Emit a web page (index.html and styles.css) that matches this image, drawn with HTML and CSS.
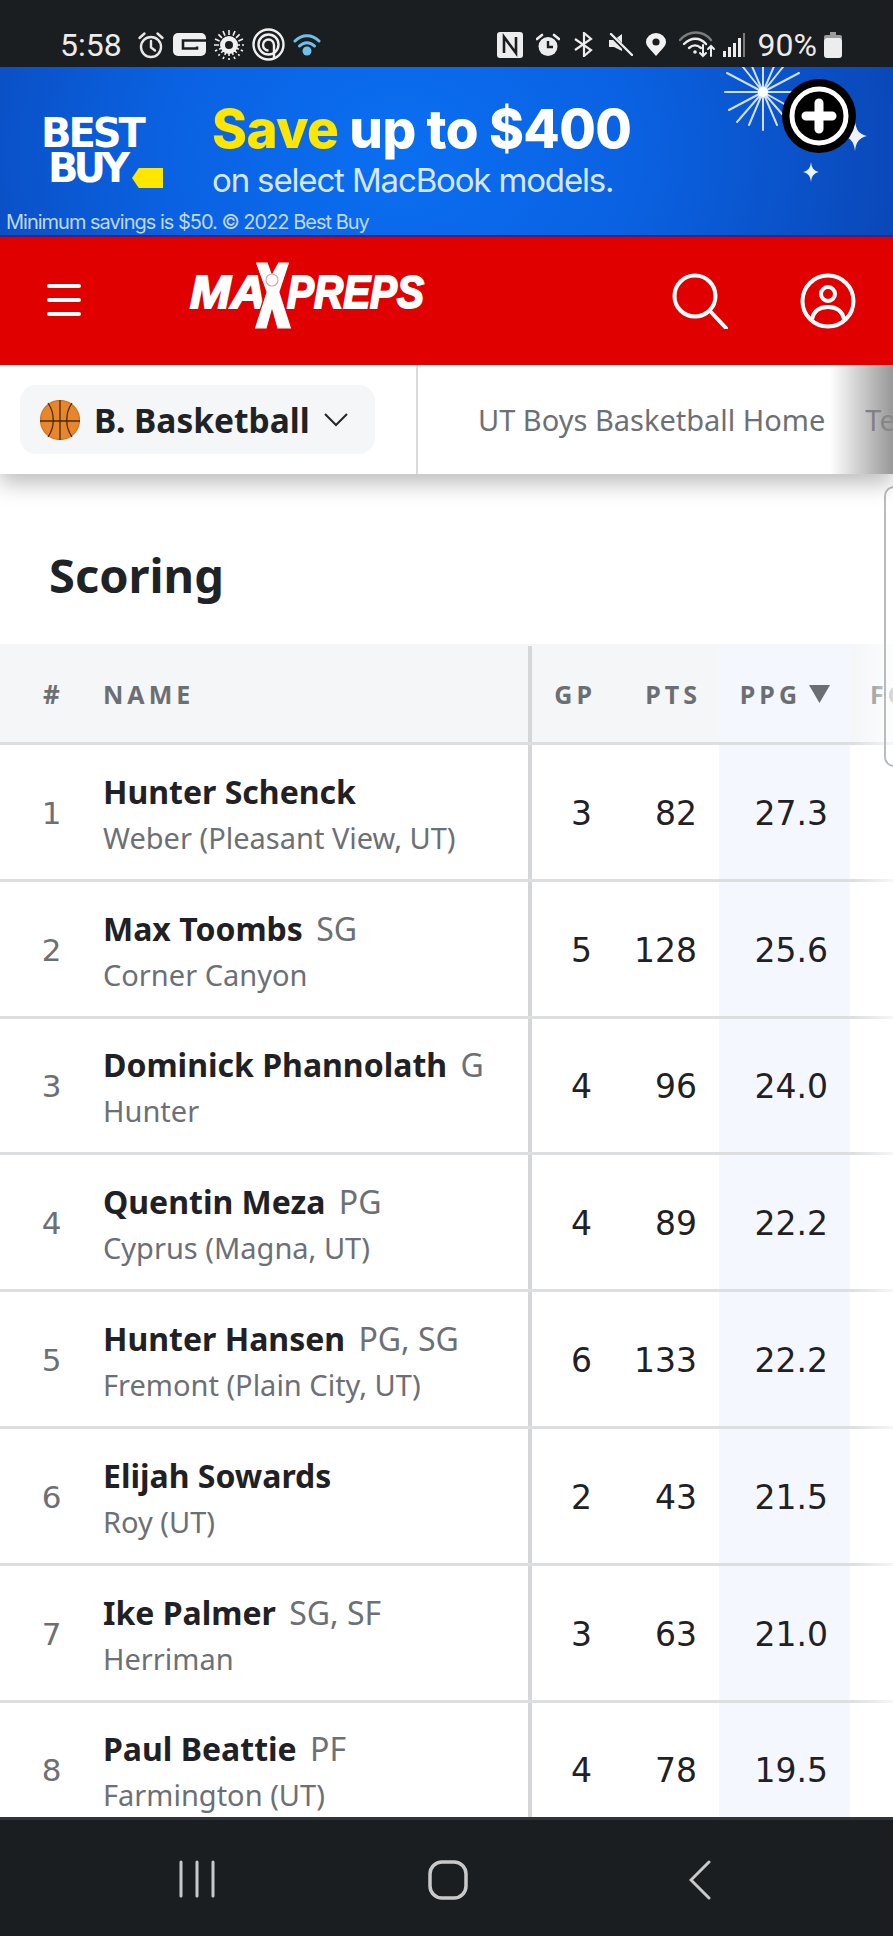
FILE: index.html
```html
<!DOCTYPE html>
<html lang="en">
<head>
<meta charset="utf-8">
<title>Scoring - MaxPreps</title>
<link rel="stylesheet" href="styles.css">
</head>
<body>
<div class="screen">
  <div class="status">
    <div class="status-group">
      <span class="clock">5:58</span>
      <svg class="ic" width="28" height="28" viewBox="0 0 28 28" fill="none" stroke="#e8e8e8" stroke-width="2.4" stroke-linecap="round"><circle cx="14" cy="16" r="10"/><path d="M14 10v6.5l4 3M2.5 7l5-4.5M25.5 7l-5-4.5"/></svg>
      <svg class="ic" width="33" height="23" viewBox="0 0 33 23"><rect width="33" height="23" rx="5" fill="#f0f0f0"/><path d="M33 7.500H10v8h14v-2" fill="none" stroke="#1b1e21" stroke-width="2.600"/></svg>
      <svg class="ic" width="30" height="30" viewBox="0 0 30 30" stroke="#f0f0f0" stroke-width="1.6"><path d="M15 0v30M0 15h30M4.4 4.4l21.2 21.2M25.6 4.4L4.4 25.6M9 1l12 28M21 1L9 29M1 9l28 12M29 9L1 21" stroke-dasharray="5 2"/><circle cx="15" cy="15" r="9" fill="#f0f0f0" stroke="none"/><circle cx="15" cy="15" r="4" fill="#1b1e21" stroke="none"/></svg>
      <svg class="ic" width="33" height="33" viewBox="0 0 33 33" fill="none" stroke="#f0f0f0" stroke-width="2.4"><circle cx="16.5" cy="16.5" r="15"/><circle cx="16.5" cy="16.5" r="10"/><path d="M22 31V17a5.500 5.500 0 1 0-5.500 5.500"/></svg>
      <svg class="ic" width="28" height="25" viewBox="0 0 28 25" fill="none" stroke="#6ec1ea" stroke-width="3" stroke-linecap="round"><path d="M2 9c7-7 17-7 24 0M6.500 14c4.500-4.500 10.500-4.500 15 0"/><circle cx="14" cy="19" r="4.500" fill="#6ec1ea" stroke="none"/></svg>
    </div>
    <div class="status-group right">
      <svg class="ic" width="26" height="26" viewBox="0 0 26 26"><rect width="26" height="26" rx="3" fill="#ededed"/><path d="M7 21V5l12 16V5" fill="none" stroke="#1b1e21" stroke-width="2.600"/></svg>
      <svg class="ic" width="24" height="24" viewBox="0 0 24 24"><circle cx="12" cy="13.500" r="9.500" fill="#ededed"/><path d="M12 8v6h5" fill="none" stroke="#1b1e21" stroke-width="2.400"/><path d="M1 6l5-4M23 6l-5-4" stroke="#ededed" stroke-width="2.600" stroke-linecap="round"/></svg>
      <svg class="ic" width="22" height="25" viewBox="0 0 22 25" fill="none" stroke="#ededed" stroke-width="2.200"><path d="M2 7l16 11-7 6V1l7 6L2 18"/></svg>
      <svg class="ic" width="25" height="23" viewBox="0 0 25 23"><path d="M1 7h5l8-6v17l-8-4H1z" fill="#ededed"/><path d="M2 1l21 21" stroke="#1b1e21" stroke-width="4"/><path d="M3 1l21 21" stroke="#ededed" stroke-width="2.400" stroke-linecap="round"/></svg>
      <svg class="ic" width="20" height="23" viewBox="0 0 20 23"><path d="M10 23C6 18 0 13.500 0 9a10 9 0 0 1 20 0c0 4.500-6 9-10 14z" fill="#f2f2f2"/><circle cx="10" cy="9" r="3.600" fill="#1b1e21"/></svg>
      <svg class="ic tight" width="37" height="27" viewBox="0 0 37 27" fill="none" stroke-linecap="round"><path d="M1 9c9-10 23-10 31 0" stroke="#7c7c7c" stroke-width="2.400"/><path d="M5 13c7-7 16-7 22 0M10 17c4-3.500 8-3.500 12 0" stroke="#ededed" stroke-width="2.400"/><circle cx="16" cy="21" r="1.800" fill="#ededed"/><path d="M24 14v11m-3-3l3 3 3-3M32 25V15m-3 3l3-3 3 3" stroke="#ededed" stroke-width="2"/></svg>
      <svg class="ic" width="22" height="24" viewBox="0 0 22 24" fill="#ededed"><rect x="0" y="18" width="3" height="6"/><rect x="5" y="14" width="3" height="10"/><rect x="10" y="10" width="3" height="14"/><rect x="15" y="5" width="3" height="19"/><rect x="20" y="0" width="2" height="24" fill="#7c7c7c"/></svg>
      <span class="pct">90%</span>
      <svg class="ic tight-left" width="18" height="26" viewBox="0 0 18 26"><path d="M6 0h6v3H6z" fill="#9c9c9c"/><rect y="3" width="18" height="5" rx="2" fill="#9c9c9c"/><rect y="6" width="18" height="20" rx="3" fill="#ededed"/></svg>
    </div>
  </div>

  <div class="banner">
    <div class="bb-logo">
      <div class="bb-word">BEST</div>
      <div class="bb-word second">BUY<i class="bb-tag"></i></div>
    </div>
    <div class="promo">
      <div class="promo-head"><span class="yellow">Save</span> up to $400</div>
      <div class="promo-sub">on select MacBook models.</div>
    </div>
    <div class="legal">Minimum savings is $50. © 2022 Best Buy</div>
    <svg class="firework" width="80" height="70" viewBox="0 0 80 70" stroke="#cfe0ff" stroke-width="2" stroke-linecap="round"><path d="M40 25V-5M40 25V63M40 25H2M40 25H76M40 25L20 0M40 25L60 0M40 25L14 55M40 25L66 55M40 25L4 6M40 25L76 6M40 25L6 43M40 25L72 43M40 25L28 -3M40 25L52 -3M40 25L26 58M40 25L54 58"/><circle cx="40" cy="25" r="5" fill="#fff" stroke="none"/></svg>
    <svg class="sparkle one" width="24" height="30" viewBox="0 0 24 30"><path d="M12 0c1 9 4 13 12 15-8 2-11 6-12 15-1-9-4-13-12-15 8-2 11-6 12-15z" fill="#eaf3ff"/></svg>
    <svg class="sparkle two" width="16" height="22" viewBox="0 0 24 30"><path d="M12 0c1 9 4 13 12 15-8 2-11 6-12 15-1-9-4-13-12-15 8-2 11-6 12-15z" fill="#eaf3ff"/></svg>
    <svg class="plus" width="74" height="74" viewBox="0 0 74 74"><circle cx="37" cy="37" r="37" fill="#000"/><circle cx="37" cy="37" r="27" fill="none" stroke="#fff" stroke-width="5"/><path d="M37 24v26M24 37h26" stroke="#fff" stroke-width="9" stroke-linecap="round"/></svg>
  </div>

  <header class="topbar">
    <div class="burger"><i></i><i></i><i></i></div>
    <svg class="logo" width="240" height="70" viewBox="0 0 240 70">
      <text class="logo-text" x="0" y="46" textLength="76" lengthAdjust="spacingAndGlyphs">MA</text>
      <text class="logo-text" x="97" y="46" textLength="137" lengthAdjust="spacingAndGlyphs">PREPS</text>
      <path d="M65 0h13l4 11 6-11h12L90 30l12 37H87l-5-18-5 18H64l12-37z" fill="#fff" stroke="#e00000" stroke-width="1.200"/>
      <circle cx="82" cy="18" r="6" fill="#fff" stroke="#dda6a6" stroke-width="1.200"/>
    </svg>
    <div class="top-actions">
      <svg width="56" height="56" viewBox="0 0 56 56" fill="none" stroke="#fff" stroke-width="4" stroke-linecap="round"><circle cx="23" cy="23" r="20.500"/><path d="M38 38l16 17"/></svg>
      <svg width="56" height="56" viewBox="0 0 56 56" fill="none" stroke="#fff" stroke-width="4"><circle cx="28" cy="28" r="25.500"/><circle cx="28" cy="21" r="7"/><path d="M12 46c2-9 9-12 16-12s14 3 16 12"/></svg>
    </div>
  </header>

  <nav class="subnav">
    <div class="sport-cell">
      <div class="sport-pill">
        <svg width="40" height="40" viewBox="0 0 40 40" fill="none" stroke="#4a2a10" stroke-width="1.300"><circle cx="20" cy="20" r="19.500" fill="#e8862c" stroke="#d57722"/><path d="M0 21h40M20 0v40M8 3c7 10 7 24 0 34M32 3c-7 10-7 24 0 34"/></svg>
        <span class="sport-name">B. Basketball</span>
        <svg width="24" height="14" viewBox="0 0 24 14" fill="none" stroke="#24272a" stroke-width="2"><path d="M1 1l11 11L23 1"/></svg>
      </div>
    </div>
    <div class="sub-links"><span>UT Boys Basketball Home</span><span>Teams</span></div>
    <div class="sub-fade"></div>
  </nav>

  <main class="content">
    <h1 class="title">Scoring</h1>
    <div class="table">
      <div class="row head">
        <div class="c-rank">#</div>
        <div class="c-name"><span>NAME</span></div>
        <div class="c-num gp"><span class="lab">GP</span></div>
        <div class="c-num pts"><span class="lab">PTS</span></div>
        <div class="c-num ppg"><span class="lab-sort">PPG</span><i class="sort"></i></div>
        <div class="c-next">FG</div>
      </div>
      <div class="row"><div class="c-rank">1</div><div class="c-name"><div class="player"><b>Hunter Schenck</b></div><div class="school">Weber (Pleasant View, UT)</div></div><div class="c-num gp">3</div><div class="c-num pts">82</div><div class="c-num ppg">27.3</div><div class="c-next"></div></div>
      <div class="row"><div class="c-rank">2</div><div class="c-name"><div class="player"><b>Max Toombs</b> SG</div><div class="school">Corner Canyon</div></div><div class="c-num gp">5</div><div class="c-num pts">128</div><div class="c-num ppg">25.6</div><div class="c-next"></div></div>
      <div class="row"><div class="c-rank">3</div><div class="c-name"><div class="player"><b>Dominick Phannolath</b> G</div><div class="school">Hunter</div></div><div class="c-num gp">4</div><div class="c-num pts">96</div><div class="c-num ppg">24.0</div><div class="c-next"></div></div>
      <div class="row"><div class="c-rank">4</div><div class="c-name"><div class="player"><b>Quentin Meza</b> PG</div><div class="school">Cyprus (Magna, UT)</div></div><div class="c-num gp">4</div><div class="c-num pts">89</div><div class="c-num ppg">22.2</div><div class="c-next"></div></div>
      <div class="row"><div class="c-rank">5</div><div class="c-name"><div class="player"><b>Hunter Hansen</b> PG, SG</div><div class="school">Fremont (Plain City, UT)</div></div><div class="c-num gp">6</div><div class="c-num pts">133</div><div class="c-num ppg">22.2</div><div class="c-next"></div></div>
      <div class="row"><div class="c-rank">6</div><div class="c-name"><div class="player"><b>Elijah Sowards</b></div><div class="school">Roy (UT)</div></div><div class="c-num gp">2</div><div class="c-num pts">43</div><div class="c-num ppg">21.5</div><div class="c-next"></div></div>
      <div class="row"><div class="c-rank">7</div><div class="c-name"><div class="player"><b>Ike Palmer</b> SG, SF</div><div class="school">Herriman</div></div><div class="c-num gp">3</div><div class="c-num pts">63</div><div class="c-num ppg">21.0</div><div class="c-next"></div></div>
      <div class="row"><div class="c-rank">8</div><div class="c-name"><div class="player"><b>Paul Beattie</b> PF</div><div class="school">Farmington (UT)</div></div><div class="c-num gp">4</div><div class="c-num pts">78</div><div class="c-num ppg">19.5</div><div class="c-next"></div></div>
      <div class="table-fade"></div>
    </div>
    <div class="scroll-card"></div>
  </main>

  <footer class="navbar">
    <svg width="36" height="38" viewBox="0 0 36 38" stroke="#c9c9c9" stroke-width="3" stroke-linecap="round"><path d="M2 2v34M18 2v34M34 2v34"/></svg>
    <svg class="nav-home" width="40" height="40" viewBox="0 0 40 40" fill="none" stroke="#c9c9c9" stroke-width="3.500"><rect x="2" y="2" width="36" height="36" rx="12"/></svg>
    <svg class="nav-back" width="22" height="40" viewBox="0 0 22 40" fill="none" stroke="#c9c9c9" stroke-width="3" stroke-linecap="round"><path d="M20 2L2 20l18 18"/></svg>
  </footer>
</div>
</body>
</html>
```
FILE: styles.css
```css
* { box-sizing: border-box; }
html, body { margin: 0; padding: 0; background: #fff; }
body { font-family: "Noto Sans", sans-serif; color: #1f2124; }
.screen { width: 893px; height: 1936px; display: flex; flex-direction: column; overflow: hidden; position: relative; }

/* status bar */
.status { height: 67px; flex: none; background: #1b1e21; display: flex; justify-content: space-between; align-items: center; padding: 22px 51px 0 60px; font-family: Roboto, sans-serif; color: #ececec; }
.status-group { display: flex; align-items: center; gap: 8px; }
.status-group.right { gap: 13px; }
.clock { font-size: 32px; line-height: 34px; margin-right: 7px; }
.pct { font-size: 32px; line-height: 34px; }
.ic { display: block; flex: none; }
.ic.tight { margin-right: -6px; }
.ic.tight-left { margin-left: -6px; }

/* banner */
.banner { height: 170px; flex: none; position: relative; overflow: hidden; display: flex; align-items: flex-start; padding: 49px 0 0 41px; border-bottom: 2px solid #4f1a78; background: radial-gradient(ellipse 520px 420px at 400px 85px, #0a6ff2 0%, #0a62e2 45%, #0a46b6 100%); color: #fff; font-family: Inter, "Liberation Sans", sans-serif; }
.bb-logo { width: 171px; flex: none; font-family: "DejaVu Sans", sans-serif; font-weight: 700; line-height: 35px; }
.bb-word { font-size: 40px; letter-spacing: -3px; }
.bb-word.second { margin-left: 7px; position: relative; letter-spacing: -5px; }
.bb-tag { position: absolute; left: 84px; top: 17px; width: 31px; height: 20px; background: #ffe600; clip-path: polygon(22% 0, 100% 0, 100% 100%, 22% 100%, 0 50%); }
.promo { margin-top: -18px; }
.promo-head { font-size: 53px; line-height: 62px; font-weight: 800; letter-spacing: -0.6px; color: #fff; white-space: nowrap; }
.yellow { color: #ffe600; }
.promo-sub { font-size: 33px; line-height: 40px; letter-spacing: -1.15px; color: #d7e6ff; margin-top: 0; }
.legal { position: absolute; left: 6px; bottom: 0; font-size: 20px; line-height: 26px; letter-spacing: -1px; color: #c2d6f5; }
.firework { position: absolute; left: 723px; top: 0; }
.sparkle { position: absolute; }
.sparkle.one { left: 843px; top: 54px; }
.sparkle.two { left: 803px; top: 94px; }
.plus { position: absolute; left: 782px; top: 12px; }

/* red top bar */
.topbar { height: 128px; flex: none; background: #e00000; display: flex; align-items: flex-start; padding: 36px 37px 0 47px; color: #fff; }
.burger { width: 34px; display: flex; flex-direction: column; gap: 10px; margin-top: 11px; flex: none; }
.burger i { display: block; height: 4px; background: #fff; border-radius: 2px; }
.logo { margin: -11px 0 0 109px; flex: none; overflow: visible; }
.logo-text { font-family: "Liberation Sans", sans-serif; font-weight: 700; font-style: italic; font-size: 46px; fill: #fff; stroke: #fff; stroke-width: 2px; }
.top-actions { margin-left: auto; display: flex; gap: 72px; }
.top-actions svg { display: block; }

/* sub nav */
.subnav { height: 109px; flex: none; background: #fff; display: flex; position: relative; z-index: 2; box-shadow: 0 10px 20px rgba(0,0,0,.25); overflow: hidden; clip-path: inset(0 0 -40px 0); }
.sport-cell { width: 418px; flex: none; border-right: 2px solid #d9dbdd; padding: 20px 0 0 20px; }
.sport-pill { width: 355px; height: 69px; background: #f5f6f8; border-radius: 16px; display: flex; align-items: center; padding-left: 20px; gap: 14px; }
.sport-name { font-size: 33.500px; font-weight: 700; color: #202326; white-space: nowrap; }
.sub-links { display: flex; align-items: center; gap: 40px; padding-left: 60px; font-size: 29px; color: #6c7075; white-space: nowrap; }
.sub-fade { position: absolute; right: 0; top: 0; bottom: 0; width: 63px; background: linear-gradient(to right, rgba(140,140,140,0), rgba(140,140,140,.9)); }

/* content */
.content { flex: 1; min-height: 0; position: relative; overflow: hidden; background: #fff; }
.title { margin: 0; height: 170px; padding: 70px 0 0 49px; font-size: 47px; line-height: 62px; font-weight: 700; color: #202326; }
.table { position: relative; }
.row { display: flex; height: 136.800px; border-bottom: 3px solid #dcdee0; align-items: stretch; }
.row.head { height: 101px; padding-top: 2px; background: #f5f6f8; font-weight: 700; font-size: 25px; letter-spacing: 4px; color: #6b6f73; }
.c-rank { width: 103px; flex: none; display: flex; align-items: center; justify-content: center; padding-top: 2px; font-family: "DejaVu Sans", sans-serif; font-size: 31px; color: #6c7075; }
.head .c-rank { padding-top: 0; font-family: "Noto Sans", sans-serif; font-size: 26px; letter-spacing: 0; }
.c-name { width: 429px; flex: none; border-right: 4px solid #d4d6d8; display: flex; flex-direction: column; justify-content: center; padding-top: 6px; white-space: nowrap; }
.head .c-name { padding-top: 0; }
.player { font-size: 32px; line-height: 46px; color: #6c7075; }
.player b { color: #1f2124; font-weight: 700; margin-right: 5px; }
.school { font-size: 29px; line-height: 46px; color: #6c7075; }
.c-num { flex: none; display: flex; align-items: center; justify-content: flex-end; padding-top: 3px; font-family: "DejaVu Sans", sans-serif; font-size: 33px; color: #1f2124; }
.head .c-num { padding-top: 0; font-family: "Noto Sans", sans-serif; font-size: 25px; color: #6b6f73; }
.lab { margin-right: -4px; }
.lab-sort { margin-right: -2px; }
.gp { width: 60px; }
.pts { width: 105px; }
.ppg { width: 131px; margin-left: 22px; padding-right: 22px; background: #f4f7fd; }
.sort { width: 21px; height: 18px; margin-left: 10px; margin-right: -2px; background: #6b6f73; clip-path: polygon(0 0, 100% 0, 50% 100%); }
.c-next { flex: 1; display: flex; align-items: center; padding-left: 20px; }
.table-fade { position: absolute; right: 0; top: 0; bottom: 0; width: 40px; background: linear-gradient(to right, rgba(255,255,255,0), rgba(255,255,255,.75)); }
.scroll-card { position: absolute; right: -20px; top: 12px; width: 29px; height: 281px; border: 2px solid #b9bcbf; border-radius: 10px; }

/* android nav */
.navbar { height: 119px; flex: none; background: #1b1e21; border-top: 3px solid #30343a; padding: 40px 0 0 179px; display: flex; align-items: flex-start; }
.navbar svg { display: block; flex: none; }
.nav-home { margin-left: 213px; }
.nav-back { margin-left: 221px; }
```
